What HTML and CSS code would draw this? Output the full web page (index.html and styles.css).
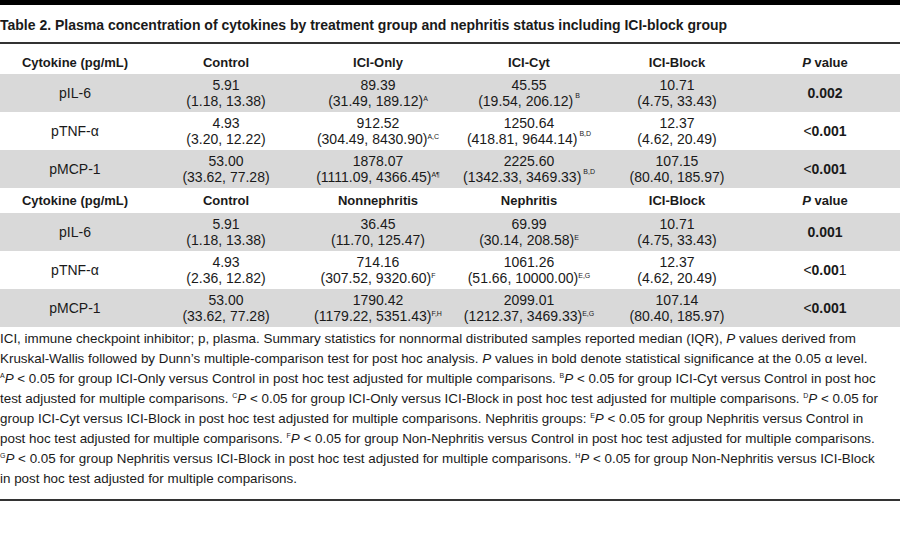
FILE: index.html
```html
<!DOCTYPE html>
<html>
<head>
<meta charset="utf-8">
<link rel="stylesheet" href="styles.css">
</head>
<body>
<div class="topbar"></div>
<h1 class="title">Table 2. Plasma concentration of cytokines by treatment group and nephritis status including ICI-block group</h1>
<table class="data">
  <colgroup>
    <col class="c1"><col class="c2"><col class="c3"><col class="c4"><col class="c5"><col class="c6">
  </colgroup>
  <tr class="head first">
    <th>Cytokine (pg/mL)</th><th>Control</th><th>ICI-Only</th><th>ICI-Cyt</th><th>ICI-Block</th><th><i>P</i> value</th>
  </tr>
  <tr class="gray">
    <td>pIL-6</td>
    <td>5.91<br>(1.18, 13.38)</td>
    <td>89.39<br>(31.49, 189.12)<sup>A</sup></td>
    <td>45.55<br>(19.54, 206.12)<sup class="gap">B</sup></td>
    <td>10.71<br>(4.75, 33.43)</td>
    <td><b>0.002</b></td>
  </tr>
  <tr>
    <td>pTNF-α</td>
    <td>4.93<br>(3.20, 12.22)</td>
    <td>912.52<br>(304.49, 8430.90)<sup>A,C</sup></td>
    <td>1250.64<br>(418.81, 9644.14)<sup class="gap">B,D</sup></td>
    <td>12.37<br>(4.62, 20.49)</td>
    <td>&lt;<b>0.001</b></td>
  </tr>
  <tr class="gray">
    <td>pMCP-1</td>
    <td>53.00<br>(33.62, 77.28)</td>
    <td>1878.07<br>(1111.09, 4366.45)<sup>A¶</sup></td>
    <td>2225.60<br>(1342.33, 3469.33)<sup class="gap">B,D</sup></td>
    <td>107.15<br>(80.40, 185.97)</td>
    <td>&lt;<b>0.001</b></td>
  </tr>
  <tr class="head second">
    <th>Cytokine (pg/mL)</th><th>Control</th><th>Nonnephritis</th><th>Nephritis</th><th>ICI-Block</th><th><i>P</i> value</th>
  </tr>
  <tr class="gray">
    <td>pIL-6</td>
    <td>5.91<br>(1.18, 13.38)</td>
    <td>36.45<br>(11.70, 125.47)</td>
    <td>69.99<br>(30.14, 208.58)<sup>E</sup></td>
    <td>10.71<br>(4.75, 33.43)</td>
    <td><b>0.001</b></td>
  </tr>
  <tr>
    <td>pTNF-α</td>
    <td>4.93<br>(2.36, 12.82)</td>
    <td>714.16<br>(307.52, 9320.60)<sup>F</sup></td>
    <td>1061.26<br>(51.66, 10000.00)<sup>E,G</sup></td>
    <td>12.37<br>(4.62, 20.49)</td>
    <td>&lt;<b>0.00</b>1</td>
  </tr>
  <tr class="gray">
    <td>pMCP-1</td>
    <td>53.00<br>(33.62, 77.28)</td>
    <td>1790.42<br>(1179.22, 5351.43)<sup>F,H</sup></td>
    <td>2099.01<br>(1212.37, 3469.33)<sup>E,G</sup></td>
    <td>107.14<br>(80.40, 185.97)</td>
    <td>&lt;<b>0.001</b></td>
  </tr>
</table>
<p class="notes">ICI, immune checkpoint inhibitor; p, plasma. Summary statistics for nonnormal distributed samples reported median (IQR), <i>P</i> values derived from<br>Kruskal-Wallis followed by Dunn’s multiple-comparison test for post hoc analysis. <i>P</i> values in bold denote statistical significance at the 0.05 α level.<br><sup>A</sup><i>P</i> &lt; 0.05 for group ICI-Only versus Control in post hoc test adjusted for multiple comparisons. <sup>B</sup><i>P</i> &lt; 0.05 for group ICI-Cyt versus Control in post hoc<br>test adjusted for multiple comparisons. <sup>C</sup><i>P</i> &lt; 0.05 for group ICI-Only versus ICI-Block in post hoc test adjusted for multiple comparisons. <sup>D</sup><i>P</i> &lt; 0.05 for<br>group ICI-Cyt versus ICI-Block in post hoc test adjusted for multiple comparisons. Nephritis groups: <sup>E</sup><i>P</i> &lt; 0.05 for group Nephritis versus Control in<br>post hoc test adjusted for multiple comparisons. <sup>F</sup><i>P</i> &lt; 0.05 for group Non-Nephritis versus Control in post hoc test adjusted for multiple comparisons.<br><sup>G</sup><i>P</i> &lt; 0.05 for group Nephritis versus ICI-Block in post hoc test adjusted for multiple comparisons. <sup>H</sup><i>P</i> &lt; 0.05 for group Non-Nephritis versus ICI-Block<br>in post hoc test adjusted for multiple comparisons.</p>
</body>
</html>
```
FILE: styles.css
```css
html, body {
  margin: 0;
  padding: 0;
  background: #fff;
  color: #1a1a1a;
  font-family: "Liberation Sans", Arial, sans-serif;
}
.topbar {
  height: 5px;
  background: #000;
}
.title {
  margin: 0;
  padding: 10px 0 7px 0;
  font-size: 14px;
  line-height: 20px;
  font-weight: bold;
  border-bottom: 2px solid #333;
}
.data {
  width: 900px;
  border-collapse: collapse;
  table-layout: fixed;
  font-size: 14px;
}
.c1 { width: 150px; }
.c2 { width: 152px; }
.c3 { width: 152px; }
.c4 { width: 150px; }
.c5 { width: 146px; }
.c6 { width: 150px; }
.data th {
  font-weight: bold;
  font-size: 13px;
  text-align: center;
  padding: 0;
  line-height: 18px;
}
.head.first th {
  height: 28px;
  vertical-align: bottom;
  padding-bottom: 2px;
}
.head.second th {
  height: 25px;
  vertical-align: middle;
}
.data td {
  height: 38px;
  padding: 0;
  text-align: center;
  vertical-align: middle;
  line-height: 16px;
}
.data tr.gray td {
  background: #d9d9d9;
}
.data sup {
  font-size: 7px;
  line-height: 0;
  vertical-align: 5px;
}
.data sup.gap {
  margin-left: 2px;
  vertical-align: 8px;
}
.notes {
  margin: 2px 0 0 0;
  padding: 0 0 10px 0;
  font-size: 13.4px;
  line-height: 20px;
  border-bottom: 2px solid #333;
  white-space: nowrap;
}
.notes sup {
  font-size: 7px;
  line-height: 0;
  vertical-align: 5px;
}
```
